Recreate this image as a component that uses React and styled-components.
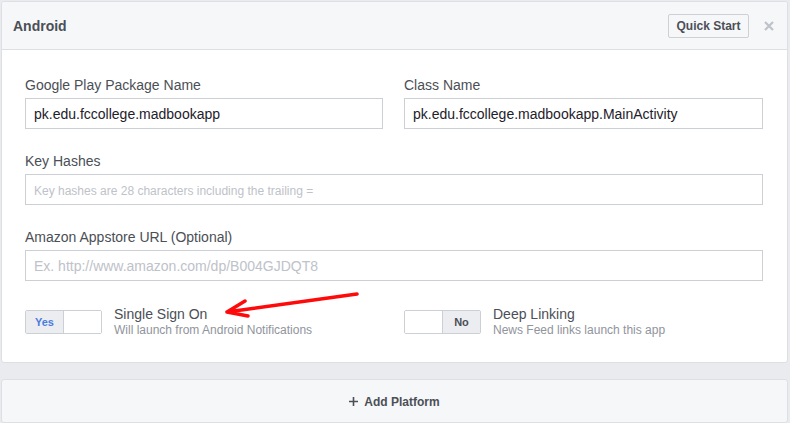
import React from "react";
import styled, { createGlobalStyle } from "styled-components";

const GlobalStyle = createGlobalStyle`
  html, body { margin: 0; padding: 0; background: #e9ebee; }
  body { font-family: "Liberation Sans", Arial, Helvetica, sans-serif; }
  * { box-sizing: border-box; }
`;

const Page = styled.div`
  padding: 1px 2px 0 1px;
`;

const Panel = styled.section`
  position: relative;
  background: #fff;
  border: 1px solid #dddfe2;
  border-radius: 3px;
`;

const Header = styled.header`
  display: flex;
  align-items: center;
  height: 48px;
  padding: 0 13px 0 11px;
  background: #f6f7f9;
  border-bottom: 1px solid #dddfe2;
  border-radius: 3px 3px 0 0;
`;

const Title = styled.h2`
  flex: 1;
  margin: 0;
  font-size: 14px;
  font-weight: bold;
  color: #4b4f56;
`;

const QuickStart = styled.button`
  height: 24px;
  width: 81px;
  padding: 0;
  font-family: inherit;
  font-size: 12px;
  font-weight: bold;
  color: #4b4f56;
  background: #f6f7f9;
  border: 1px solid #ced0d4;
  border-radius: 2px;
`;

const Close = styled.span`
  display: flex;
  margin-left: 15px;
`;

const Body = styled.div`
  display: grid;
  grid-template-columns: 358px 1fr;
  column-gap: 21px;
  row-gap: 23px;
  padding: 26px 24px 24px 23px;
`;

const Field = styled.div`
  grid-column: ${(p) => (p.$wide ? "1 / span 2" : "auto")};
`;

const Label = styled.label`
  display: block;
  margin-bottom: 4px;
  font-size: 14px;
  line-height: 18px;
  color: #4b4f56;
`;

const Input = styled.input`
  display: block;
  width: 100%;
  height: 31px;
  padding: 0 8px;
  font-family: inherit;
  font-size: 14px;
  color: #1d2129;
  background: #fff;
  border: 1px solid #ccd0d5;
  border-radius: 0;
  outline: none;
  &::placeholder {
    color: #bec2c9;
    font-size: ${(p) => (p.$small ? "12px" : "14px")};
  }
`;

const ToggleRow = styled.div`
  display: flex;
  align-items: center;
  margin-top: 2px;
`;

const Toggle = styled.div`
  display: flex;
  flex: none;
  width: 77px;
  height: 24px;
  border: 1px solid #ccd0d5;
  border-radius: 2px;
  overflow: hidden;
`;

const Segment = styled.span`
  flex: 1;
  display: flex;
  align-items: center;
  justify-content: center;
  font-size: 11px;
  font-weight: bold;
  background: ${(p) => (p.$on ? "#ebedf0" : "#fff")};
  color: ${(p) => p.$color || "#4b4f56"};
  border-left: ${(p) => (p.$divider ? "1px solid #ccd0d5" : "none")};
  border-right: ${(p) => (p.$dividerRight ? "1px solid #ccd0d5" : "none")};
`;

const ToggleText = styled.div`
  margin-left: 12px;
`;

const ToggleTitle = styled.div`
  font-size: 14px;
  line-height: 16px;
  color: #4b4f56;
`;

const ToggleSub = styled.div`
  font-size: 12px;
  line-height: 16px;
  color: #90949c;
`;

const Arrow = styled.svg`
  position: absolute;
  left: 219px;
  top: 285px;
  overflow: visible;
  pointer-events: none;
`;

const AddPlatform = styled.button`
  display: flex;
  align-items: center;
  justify-content: center;
  width: 100%;
  height: 44px;
  margin-top: 16px;
  padding: 1px 0 0;
  font-family: inherit;
  font-size: 12px;
  font-weight: bold;
  color: #4b4f56;
  background: #f6f7f9;
  border: 1px solid #dddfe2;
  border-radius: 3px;
`;

const PlusLabel = styled.span`
  margin-left: 6px;
`;

export default function App() {
  return (
    <>
      <GlobalStyle />
      <Page>
        <Panel>
          <Header>
            <Title>Android</Title>
            <QuickStart>Quick Start</QuickStart>
            <Close>
              <svg width="10" height="10" viewBox="0 0 10 10">
                <path d="M1 1 L9 9 M9 1 L1 9" stroke="#bec2c9" strokeWidth="2.2" />
              </svg>
            </Close>
          </Header>
          <Body>
            <Field>
              <Label>Google Play Package Name</Label>
              <Input defaultValue="pk.edu.fccollege.madbookapp" />
            </Field>
            <Field>
              <Label>Class Name</Label>
              <Input defaultValue="pk.edu.fccollege.madbookapp.MainActivity" />
            </Field>
            <Field $wide>
              <Label>Key Hashes</Label>
              <Input $small placeholder="Key hashes are 28 characters including the trailing =" />
            </Field>
            <Field $wide>
              <Label>Amazon Appstore URL (Optional)</Label>
              <Input placeholder="Ex. http://www.amazon.com/dp/B004GJDQT8" />
            </Field>
            <ToggleRow>
              <Toggle>
                <Segment $on $color="#4a7ce0" $dividerRight>Yes</Segment>
                <Segment />
              </Toggle>
              <ToggleText>
                <ToggleTitle>Single Sign On</ToggleTitle>
                <ToggleSub>Will launch from Android Notifications</ToggleSub>
              </ToggleText>
            </ToggleRow>
            <ToggleRow>
              <Toggle>
                <Segment />
                <Segment $on $divider>No</Segment>
              </Toggle>
              <ToggleText>
                <ToggleTitle>Deep Linking</ToggleTitle>
                <ToggleSub>News Feed links launch this app</ToggleSub>
              </ToggleText>
            </ToggleRow>
          </Body>
          <Arrow width="142" height="36" viewBox="0 0 142 36">
            <path
              d="M136 7 L6 25 M24 14 L6 25 L27 29"
              fill="none"
              stroke="#ff0a0a"
              strokeWidth="3.5"
              strokeLinecap="round"
              strokeLinejoin="round"
            />
          </Arrow>
        </Panel>
        <AddPlatform>
          <svg width="9" height="9" viewBox="0 0 9 9">
            <path d="M4.5 0 V9 M0 4.5 H9" stroke="#4b4f56" strokeWidth="1.6" />
          </svg>
          <PlusLabel>Add Platform</PlusLabel>
        </AddPlatform>
      </Page>
    </>
  );
}
